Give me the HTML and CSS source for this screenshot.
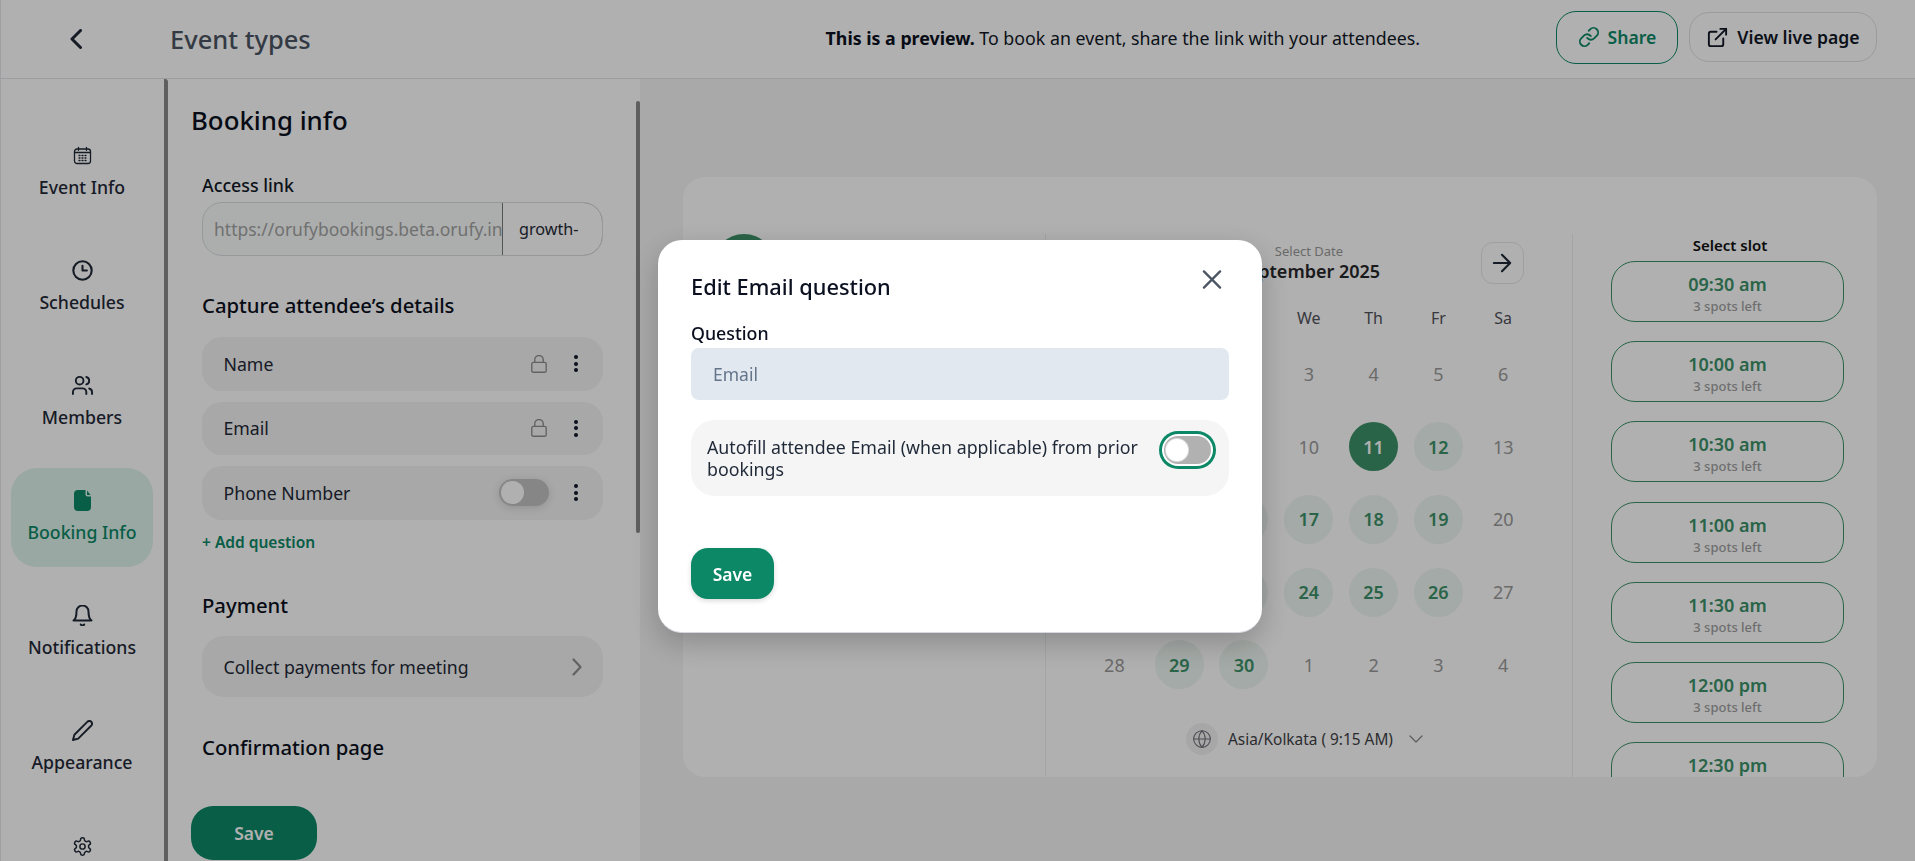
FILE: index.html
```html
<!DOCTYPE html>
<html lang="en">
<head>
<meta charset="utf-8">
<title>Booking info</title>
<link rel="stylesheet" href="styles.css">
</head>
<body>
<div class="page">
  <header class="topbar">
    <div class="back-slot"><svg class="ico back" viewBox="0 0 12 20"><path d="M10.500 1.500 2 10l8.500 8.500"/></svg></div>
    <div class="crumb">Event types</div>
    <p class="notice"><b>This is a preview.</b> To book an event, share the link with your attendees.</p>
    <div class="actions">
      <button class="btn btn-share"><svg class="ico btn-ico" viewBox="0 0 24 24"><path d="M10 13a5 5 0 0 0 7.540.54l3-3a5 5 0 0 0-7.070-7.070l-1.720 1.710"/><path d="M14 11a5 5 0 0 0-7.540-.54l-3 3a5 5 0 0 0 7.070 7.070l1.710-1.710"/></svg>Share</button>
      <button class="btn btn-view"><svg class="ico btn-ico" viewBox="0 0 24 24"><path d="M18 13v6a2 2 0 0 1-2 2H5a2 2 0 0 1-2-2V8a2 2 0 0 1 2-2h6"/><path d="M15 3h6v6"/><path d="M10 14 21 3"/></svg>View live page</button>
    </div>
  </header>
  <main class="workspace">
    <nav class="sidenav">
      <a class="nav-item"><svg class="ico nav-ico thin" viewBox="-1.500 -1.500 21 21"><rect x="1" y="2.500" width="16" height="14.500" rx="2.500"/><path d="M5 .8v3M13 .8v3M1 6h16"/><path d="M5.500 9h1M8.500 9h1M11.500 9h1M5.500 11.500h1M8.500 11.500h1M11.500 11.500h1M5.500 14h1M8.500 14h1M11.500 14h1"/></svg><span>Event Info</span></a>
      <a class="nav-item"><svg class="ico nav-ico clock" viewBox="0 0 24 24"><circle cx="12" cy="12" r="10.500"/><path d="M12 6.500V12h5"/></svg><span>Schedules</span></a>
      <a class="nav-item"><svg class="ico nav-ico" viewBox="1 2 22 20"><path d="M16 21v-2a4 4 0 0 0-4-4H6a4 4 0 0 0-4 4v2"/><circle cx="9" cy="7" r="4"/><path d="M22 21v-2a4 4 0 0 0-3-3.870"/><path d="M16 3.130a4 4 0 0 1 0 7.750"/></svg><span>Members</span></a>
      <a class="nav-item is-active"><svg class="nav-ico file" viewBox="0 0 17 21"><path class="file-body" d="M4 0h7.500v4.500a2 2 0 0 0 2 2H17V17a4 4 0 0 1-4 4H4a4 4 0 0 1-4-4V4a4 4 0 0 1 4-4z"/><path class="file-body" d="M13 .6 16.600 5h-3a.6.6 0 0 1-.6-.6z"/></svg><span>Booking Info</span></a>
      <a class="nav-item"><svg class="ico nav-ico" viewBox="2.500 1.500 19 21"><path d="M6 8a6 6 0 0 1 12 0c0 7 3 9 3 9H3s3-2 3-9"/><path d="M10.300 21a1.940 1.940 0 0 0 3.400 0"/></svg><span>Notifications</span></a>
      <a class="nav-item"><svg class="ico nav-ico" viewBox="1 1 22 22"><path d="M17 3a2.850 2.830 0 1 1 4 4L7.500 20.500 2 22l1.500-5.500Z"/></svg><span>Appearance</span></a>
      <a class="nav-item"><svg class="ico nav-ico gear" viewBox="0 0 24 24"><path d="M12.220 2h-.44a2 2 0 0 0-2 2v.18a2 2 0 0 1-1 1.730l-.43.25a2 2 0 0 1-2 0l-.15-.08a2 2 0 0 0-2.730.73l-.22.38a2 2 0 0 0 .73 2.730l.15.1a2 2 0 0 1 1 1.720v.51a2 2 0 0 1-1 1.740l-.15.09a2 2 0 0 0-.73 2.730l.22.38a2 2 0 0 0 2.730.73l.15-.08a2 2 0 0 1 2 0l.43.25a2 2 0 0 1 1 1.730V20a2 2 0 0 0 2 2h.44a2 2 0 0 0 2-2v-.18a2 2 0 0 1 1-1.730l.43-.25a2 2 0 0 1 2 0l.15.08a2 2 0 0 0 2.730-.73l.22-.39a2 2 0 0 0-.73-2.730l-.15-.08a2 2 0 0 1-1-1.740v-.5a2 2 0 0 1 1-1.740l.15-.09a2 2 0 0 0 .73-2.730l-.22-.38a2 2 0 0 0-2.730-.73l-.15.08a2 2 0 0 1-2 0l-.43-.25a2 2 0 0 1-1-1.730V4a2 2 0 0 0-2-2z"/><circle cx="12" cy="12" r="3"/></svg><span>Settings</span></a>
    </nav>
    <section class="panel">
      <div class="panel-thumb"></div>
      <h1 class="panel-title">Booking info</h1>
      <div class="panel-body">
        <label class="field-label">Access link</label>
        <div class="link-field"><span class="link-prefix">https://orufybookings.beta.orufy.in</span><span class="link-slug">growth-</span></div>
        <h2 class="section-title capture">Capture attendee’s details</h2>
        <div class="question-list">
          <div class="row"><span class="row-label">Name</span><svg class="ico lock" viewBox="0 0 15 17"><rect x=".7" y="7" width="13.600" height="9.300" rx="1.500"/><path d="M3.500 7V4.500a4 4 0 0 1 8 0V7"/></svg><span class="kebab"><i></i><i></i><i></i></span></div>
          <div class="row"><span class="row-label">Email</span><svg class="ico lock" viewBox="0 0 15 17"><rect x=".7" y="7" width="13.600" height="9.300" rx="1.500"/><path d="M3.500 7V4.500a4 4 0 0 1 8 0V7"/></svg><span class="kebab"><i></i><i></i><i></i></span></div>
          <div class="row"><span class="row-label">Phone Number</span><span class="toggle toggle-row"><i></i></span><span class="kebab"><i></i><i></i><i></i></span></div>
        </div>
        <a class="add-question">+ Add question</a>
        <h2 class="section-title payment">Payment</h2>
        <div class="row row-tall"><span class="row-label">Collect payments for meeting</span><svg class="ico row-chevron" viewBox="0 0 10 18"><path d="m1.500 1.500 7 7.500-7 7.500"/></svg></div>
        <h2 class="section-title confirm">Confirmation page</h2>
      </div>
      <button class="panel-save">Save</button>
    </section>
    <section class="preview">
      <div class="card">
        <div class="host"><div class="avatar"></div></div>
        <div class="calendar">
          <div class="cal-head">
            <button class="cal-arrow"><svg class="ico arrow-ico" viewBox="0 0 24 24"><path d="M19 12H5M12 5l-7 7 7 7"/></svg></button>
            <div class="cal-title"><small>Select Date</small><strong>September 2025</strong></div>
            <button class="cal-arrow"><svg class="ico arrow-ico" viewBox="0 0 24 24"><path d="M5 12h14M12 5l7 7-7 7"/></svg></button>
          </div>
          <div class="week"><span>Su</span><span>Mo</span><span>Tu</span><span>We</span><span>Th</span><span>Fr</span><span>Sa</span></div>
          <div class="days">
            <span>31</span><span>1</span><span>2</span><span>3</span><span>4</span><span>5</span><span>6</span>
            <span>7</span><span>8</span><span>9</span><span>10</span><span class="sel">11</span><span class="open">12</span><span>13</span>
            <span>14</span><span class="open">15</span><span class="open">16</span><span class="open">17</span><span class="open">18</span><span class="open">19</span><span>20</span>
            <span>21</span><span class="open">22</span><span class="open">23</span><span class="open">24</span><span class="open">25</span><span class="open">26</span><span>27</span>
            <span>28</span><span class="open">29</span><span class="open">30</span><span>1</span><span>2</span><span>3</span><span>4</span>
          </div>
          <div class="zone">
            <span class="globe"><svg class="ico globe-ico thin" viewBox="0 0 24 24"><circle cx="12" cy="12" r="10"/><path d="M2 12h20M12 2a15 15 0 0 1 0 20 15 15 0 0 1 0-20z"/></svg></span>
            <span class="zone-name">Asia/Kolkata ( 9:15 AM)</span>
            <svg class="ico zone-chevron" viewBox="0 0 14 8"><path d="m1 1 6 6 6-6"/></svg>
          </div>
        </div>
        <div class="slots">
          <div class="slots-title">Select slot</div>
          <div class="slot"><b>09:30 am</b><small>3 spots left</small></div>
          <div class="slot"><b>10:00 am</b><small>3 spots left</small></div>
          <div class="slot"><b>10:30 am</b><small>3 spots left</small></div>
          <div class="slot"><b>11:00 am</b><small>3 spots left</small></div>
          <div class="slot"><b>11:30 am</b><small>3 spots left</small></div>
          <div class="slot"><b>12:00 pm</b><small>3 spots left</small></div>
          <div class="slot"><b>12:30 pm</b><small>3 spots left</small></div>
        </div>
      </div>
    </section>
  </main>
</div>
<div class="scrim">
  <div class="modal">
    <div class="modal-head">
      <h2 class="modal-title">Edit Email question</h2>
      <svg class="ico modal-close" viewBox="0 0 20 20"><path d="m1.500 1.500 17 17M18.500 1.500l-17 17"/></svg>
    </div>
    <label class="modal-label">Question</label>
    <div class="modal-input">Email</div>
    <div class="modal-option">
      <span class="option-text">Autofill attendee Email (when applicable) from prior bookings</span>
      <span class="toggle toggle-focus"><i></i></span>
    </div>
    <button class="modal-save">Save</button>
  </div>
</div>
</body>
</html>
```
FILE: styles.css
```css
* { box-sizing: border-box; }
html, body { margin: 0; height: 100%; }
body {
  width: 1915px;
  height: 861px;
  overflow: hidden;
  background: #fff;
  color: #111827;
  font-family: "Noto Sans", "Open Sans", sans-serif;
}
button { font-family: inherit; cursor: pointer; }
h1, h2, p { margin: 0; }

.ico { fill: none; stroke: currentColor; stroke-width: 2; stroke-linecap: round; stroke-linejoin: round; flex: none; display: block; }
.thin { stroke-width: 1.3; }

.page { height: 861px; display: flex; flex-direction: column; }

/* top bar */
.topbar {
  height: 79px;
  flex: none;
  display: flex;
  align-items: center;
  border-bottom: 1px solid #e2e4ea;
  border-left: 1px solid #e5e7eb;
  padding-right: 38px;
}
.back-slot { width: 169px; padding-left: 69px; flex: none; }
.back { width: 12px; height: 20px; stroke-width: 3; color: #1f2937; }
.crumb { font-size: 25.500px; font-weight: 500; color: #4b5563; line-height: 34px; }
.notice { margin-left: auto; margin-right: 136px; font-size: 17.800px; line-height: 24px; color: #111827; margin-bottom: 2px; white-space: nowrap; }
.notice b { font-weight: 700; color: #0b1020; }
.actions { display: flex; align-items: center; gap: 11px; margin-bottom: 4px; }
.btn {
  display: flex;
  align-items: center;
  justify-content: center;
  gap: 8px;
  background: #fff;
  font-size: 17.600px;
  font-weight: 600;
  border-radius: 20px;
  padding: 0;
}
.btn-ico { width: 22px; height: 22px; }
.btn-view .btn-ico { width: 23px; height: 23px; }
.btn-share { width: 122px; height: 53px; border: 1.500px solid #0c8866; color: #0c8866; }
.btn-view { width: 188px; height: 50px; border: 1px solid #dfe1e7; color: #111827; }

/* workspace */
.workspace { flex: 1; min-height: 0; display: flex; }

.sidenav {
  width: 168px;
  flex: none;
  overflow: hidden;
  padding: 44px 11px 0;
  display: flex;
  flex-direction: column;
  gap: 16.100px;
  border-left: 1px solid #e5e7eb;
  border-right: 4px solid #8a8a8a;
  border-top-right-radius: 3px;
}
.nav-item {
  flex: none;
  width: 142px;
  height: 99px;
  margin-left: -1px;
  display: flex;
  flex-direction: column;
  align-items: center;
  padding-top: 22px;
  border-radius: 26px;
  font-size: 17.700px;
  font-weight: 500;
  color: #1f2937;
}
.nav-item span { line-height: 24px; margin-top: 9px; }
.nav-ico { width: 21px; height: 21px; }
.clock { stroke-width: 2.400; }
.is-active { background: #dff3ec; color: #0c8866; }
.file { width: 17px; height: 21px; }
.file-body { fill: #0c8866; }
.gear { stroke-width: 1.700; }

/* panel */
.panel { width: 472px; flex: none; position: relative; overflow: hidden; padding: 25px 0 0 23px; }
.panel-thumb { position: absolute; right: 0; top: 22px; width: 4px; height: 432px; background: #8a8a8a; border-radius: 2px; }
.panel-title { font-size: 25.800px; font-weight: 500; line-height: 32px; color: #0b1020; }
.panel-body { padding-left: 11px; width: 412px; margin-top: 37px; }
.field-label { display: block; font-size: 17.800px; font-weight: 500; line-height: 24px; }
.link-field {
  margin-top: 5px;
  height: 54px;
  display: flex;
  border: 1px solid #dadde3;
  border-radius: 20px;
  background: #fafdfc;
  overflow: hidden;
}
.link-prefix { flex: 1; min-width: 0; padding-left: 11px; line-height: 52px; font-size: 17.500px; color: #a3a3a3; white-space: nowrap; overflow: hidden; }
.link-slug {
  flex: none;
  width: 101px;
  margin: -1px -1px -1px 0;
  border: 1px solid #7a7a7a;
  border-radius: 0 20px 20px 0;
  background: #fff;
  padding-left: 16px;
  line-height: 53px;
  font-size: 16.200px;
  color: #1f2937;
}
.section-title { font-size: 20.300px; font-weight: 500; line-height: 28px; color: #0b1020; }
.capture { margin-top: 35px; }
.payment { margin-top: 39px; }
.confirm { margin-top: 36px; }
.question-list { margin-top: 18px; display: flex; flex-direction: column; gap: 11px; }
.row {
  height: 53.500px;
  display: flex;
  align-items: center;
  padding: 0 25px 0 21.500px;
  background: #f3f3f3;
  border-radius: 20px;
  font-size: 17.700px;
  color: #1f2937;
}
.row-tall { height: 61px; margin-top: 17px; border-radius: 22px; padding-top: 1px; }
.row-label { flex: 1; }
.lock { width: 16px; height: 18px; stroke-width: 1.300; color: #8f8f8f; margin-right: 27px; }
.kebab { display: flex; flex-direction: column; gap: 2.500px; flex: none; }
.kebab i { width: 4px; height: 4px; border-radius: 50%; background: #111827; }
.row-chevron { width: 10px; height: 18px; color: #8f8f8f; stroke-width: 2.200; margin-right: -4px; }
.add-question { display: block; margin-top: 12px; line-height: 20px; font-size: 15.500px; font-weight: 600; color: #0c8866; }
.panel-save {
  display: block;
  margin-top: 45px;
  width: 126px;
  height: 54px;
  border: 0;
  border-radius: 22px;
  background: #0c8866;
  color: #fff;
  font-size: 17.500px;
  font-weight: 600;
}

/* toggles */
.toggle { display: block; flex: none; position: relative; border-radius: 14px; }
.toggle i { position: absolute; display: block; background: #fff; border-radius: 50%; }
.toggle-row { width: 50px; height: 27px; background: #c2c2c2; margin-right: 25px; box-shadow: 0 2px 8px rgba(0,0,0,.12); }
.toggle-row i { left: 2px; top: 2px; width: 23px; height: 23px; }
.toggle-focus { width: 47px; height: 28px; background: #b1b1b1; box-shadow: 0 0 0 2px #fff, 0 0 0 5px #0c8866; border-radius: 14px; }
.toggle-focus i { left: 2px; top: 3px; width: 22px; height: 22px; box-shadow: 0 0 0 1px #ddd; }

/* preview */
.preview { flex: 1; min-width: 0; background: #f5f5f5; padding: 98px 38px 0 43px; height: 782px; }
.card { height: 600px; background: #fff; border-radius: 22px; overflow: hidden; display: flex; padding-top: 57px; }
.host { width: 362px; flex: none; padding: 0 0 0 30px; }
.avatar { width: 62px; height: 62px; border-radius: 50%; background: #3c9269; }
.calendar { width: 527px; flex: none; border-left: 1px solid #eceef1; padding: 8px 0 0 36px; }
.cal-head { width: 453px; height: 42px; display: flex; justify-content: space-between; align-items: flex-start; padding: 0 11px; }
.cal-arrow { width: 43px; height: 42px; display: flex; align-items: center; justify-content: center; background: #fff; border: 1px solid #e5e7eb; border-radius: 12px; color: #1f2937; padding: 0; }
.arrow-ico { width: 28px; height: 28px; stroke-width: 1.800; }
.cal-title { display: flex; flex-direction: column; align-items: center; margin-left: 1px; }
.cal-title small { font-size: 13px; line-height: 18px; color: #9a9a9a; }
.cal-title strong { font-size: 18px; line-height: 22px; font-weight: 600; color: #27272a; }
.week, .days { width: 453.600px; display: grid; grid-template-columns: repeat(7, 1fr); justify-items: center; }
.week { margin-top: 24px; font-size: 16px; line-height: 20px; color: #52525b; }
.days { margin-top: 21.500px; row-gap: 23.700px; font-size: 18px; color: #9a9a9a; }
.days span { width: 49px; height: 49px; border-radius: 50%; display: flex; align-items: center; justify-content: center; }
.days .open { background: #eef6f2; color: #3c9269; font-weight: 600; }
.days .sel { background: #3c9269; color: #fff; font-weight: 600; }
.zone { margin-top: 34px; display: flex; align-items: center; width: 453.600px; padding-left: 104px; font-size: 15.400px; color: #3f3f46; }
.globe { width: 32px; height: 32px; border-radius: 50%; background: #f2f2f2; display: flex; align-items: center; justify-content: center; color: #71717a; flex: none; }
.globe-ico { width: 20px; height: 20px; }
.zone-name { margin-left: 10px; }
.zone-chevron { width: 14px; height: 8px; stroke-width: 1.300; color: #8a8a8a; margin-left: 16px; }
.slots { flex: 1; min-width: 0; border-left: 1px solid #eceef1; padding: 1px 0 0 38px; }
.slots-title { width: 238px; text-align: center; font-size: 15px; font-weight: 600; line-height: 20px; color: #111; margin-bottom: 6px; }
.slot {
  width: 233px;
  height: 61px;
  margin-bottom: 19.200px;
  border: 1.500px solid #3c9269;
  border-radius: 24px;
  display: flex;
  flex-direction: column;
  align-items: center;
  padding-top: 10px;
}
.slot b { font-size: 18px; line-height: 25px; font-weight: 600; color: #3c9269; }
.slot small { font-size: 13px; line-height: 18px; font-weight: 500; color: #a1a1a1; }

/* modal */
.scrim {
  position: fixed;
  inset: 0;
  background: rgba(0, 0, 0, .31);
  display: flex;
  align-items: flex-start;
  padding: 240px 0 0 658px;
}
.modal {
  width: 604px;
  height: 393px;
  background: #fff;
  border-radius: 24px;
  border-bottom: 1px solid #d5d8de;
  box-shadow: 0 10px 30px rgba(0, 0, 0, .22);
  padding: 27px 33px 0 33px;
}
.modal-head { display: flex; justify-content: space-between; align-items: flex-start; height: 40px; }
.modal-title { font-size: 21.800px; font-weight: 500; line-height: 40px; color: #0b1020; }
.modal-close { width: 20px; height: 19px; margin: 3px 7px 0 0; color: #4b5563; stroke-width: 2.400; }
.modal-label { display: block; margin-top: 14px; font-size: 17.800px; font-weight: 500; line-height: 24px; color: #0b1020; }
.modal-input {
  margin-top: 3px;
  height: 52px;
  padding-left: 22px;
  line-height: 52px;
  background: #e2e8f0;
  border-radius: 8px;
  font-size: 17.500px;
  color: #64748b;
}
.modal-option {
  margin-top: 20px;
  height: 76px;
  display: flex;
  align-items: flex-start;
  justify-content: space-between;
  padding: 16px 18px 0 16px;
  background: #f5f5f6;
  border-radius: 24px;
}
.option-text { width: 450px; font-size: 17.800px; line-height: 22px; color: #1f2937; }
.modal-save {
  display: block;
  margin-top: 52px;
  width: 83px;
  height: 51px;
  border: 0;
  border-radius: 17px;
  background: #0c8866;
  color: #fff;
  font-size: 17.500px;
  font-weight: 600;
  box-shadow: 0 2px 5px rgba(0,0,0,.15);
}
```
